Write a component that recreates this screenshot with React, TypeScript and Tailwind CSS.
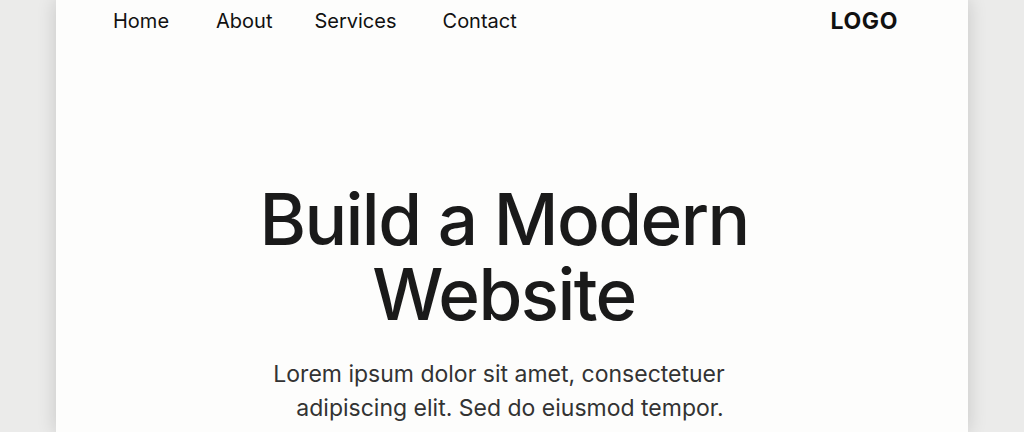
export default function App() {
  return (
    <div className="w-[1024px] h-[432px] overflow-hidden bg-[#ebebea] flex justify-center" style={{ fontFamily: "Inter, 'Noto Sans', sans-serif" }}>
      <div className="w-[912px] h-[432px] bg-[#fdfdfc] shadow-[0_0_18px_rgba(0,0,0,0.16)] flex flex-col">
        <nav className="flex items-center justify-between pl-[57px] pr-[70px] h-[40px] pt-[1px]">
          <div className="flex items-center text-[20px] text-[#111] leading-none">
            <span>Home</span>
            <span className="ml-[47px]">About</span>
            <span className="ml-[42px]">Services</span>
            <span className="ml-[46px]">Contact</span>
          </div>
          <div className="text-[23px] font-bold text-[#111] leading-none tracking-[0.6px] pt-[2px]">LOGO</div>
        </nav>
        <div className="flex flex-col items-center pt-[142px] pr-[16px]">
          <h1 className="text-[71px] font-medium leading-[75px] text-[#1a1a1a] text-center tracking-[-1.6px]">
            Build a Modern<br />Website
          </h1>
          <p className="mt-[25px] mr-[10px] text-[23px] leading-[34px] text-[#333] text-center">
            Lorem ipsum dolor sit amet, consectetuer<br />
            <span className="pl-[22px]">adipiscing elit. Sed do eiusmod tempor.</span>
          </p>
        </div>
      </div>
    </div>
  );
}
